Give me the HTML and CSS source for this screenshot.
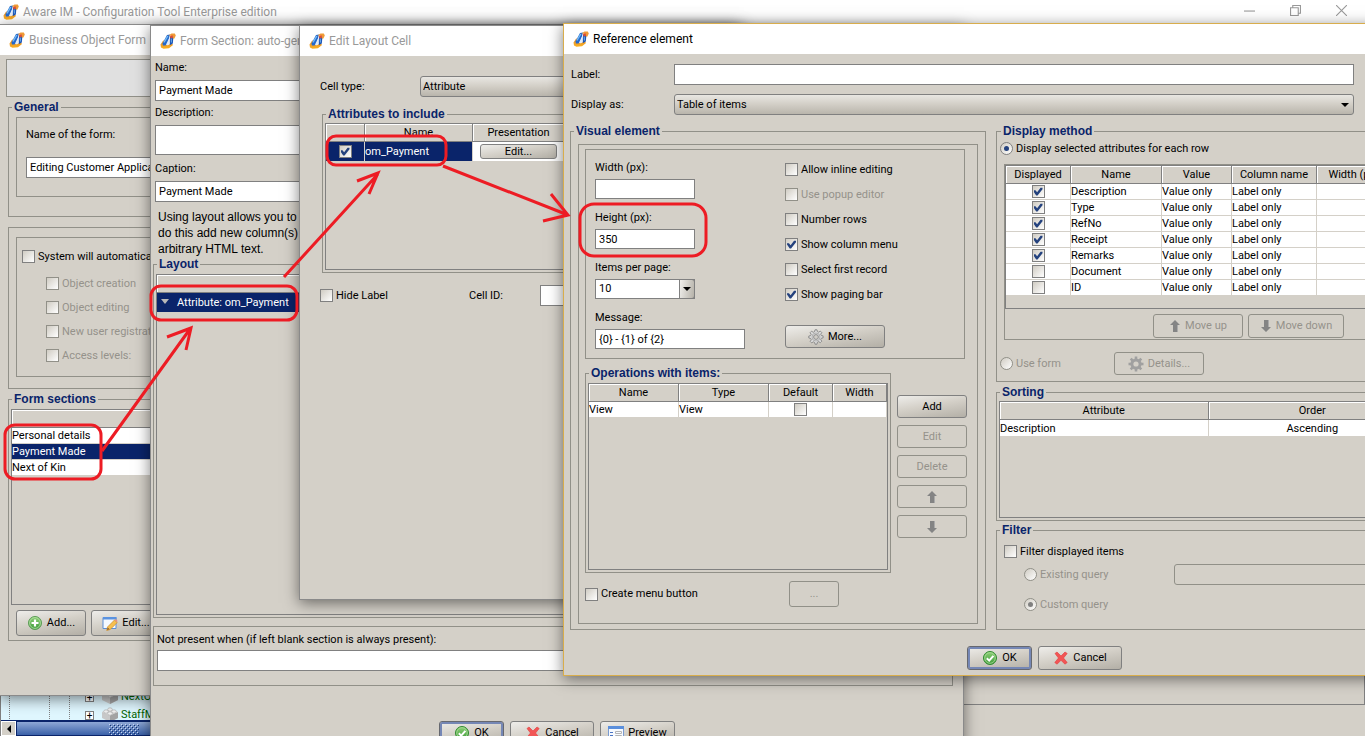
FILE: index.html
```html
<!DOCTYPE html>
<html lang="en">
<head>
<meta charset="utf-8">
<title>Aware IM - Configuration Tool Enterprise edition</title>
<link rel="stylesheet" href="styles.css">
</head>
<body>
<svg class="defs" aria-hidden="true">
  <defs>
    <linearGradient id="g-green" x1="0" y1="0" x2="0" y2="1"><stop offset="0" stop-color="#8fd077"/><stop offset="1" stop-color="#3d9a3a"/></linearGradient>
    <linearGradient id="g-gold" x1="0" y1="0" x2="0" y2="1"><stop offset="0" stop-color="#e08a30"/><stop offset="1" stop-color="#fbb020"/></linearGradient>
    <symbol id="i-logo" viewBox="0 0 16 16">
      <path d="M3.500 7 .5 11.500l.5 3 2.500 1.200 5.500-.5 4-3.200-1-1.500-5 1.500-2.500-.5z" fill="url(#g-gold)"/>
      <path d="m2.500 10.500 4.500-8.500 3-.5L8 9l-2.500 3.500H3z" fill="#2468cc"/>
      <path d="M4 9.500 7.800 3" stroke="#74bdf5" stroke-width="1.300"/>
      <path d="m6.500 10.500 2.800-5.500 1.200 1-.8 5-2.200 1.500z" fill="#e4ecf7"/>
      <path d="m10 4 3.500-.8-.7 7.300-3 1.700z" fill="#1d55b5"/>
      <path d="m11.200 5.500.2 4" stroke="#6cb2f0"/>
      <path d="M8.500 2.500 11.500.6h3.300l1 1.900-1.400 3-1.500.2L12.500 3z" fill="#ef9a35"/>
      <path d="m10 3 2.500-.8.6 2.300L10.500 5.500z" fill="#dc4a34"/>
    </symbol>
    <symbol id="i-add" viewBox="0 0 16 16"><circle cx="8" cy="8" r="6.500" fill="url(#g-green)" stroke="#5a9c55"/><circle cx="8" cy="8" r="5.400" fill="none" stroke="#b9e2a8" stroke-width=".8"/><path d="M8 4.500v7M4.500 8h7" stroke="#fff" stroke-width="2.200"/></symbol>
    <symbol id="i-ok" viewBox="0 0 16 16"><circle cx="8" cy="8" r="6.500" fill="url(#g-green)" stroke="#2f8a2f"/><circle cx="8" cy="8" r="5.300" fill="none" stroke="#a9dc98" stroke-width=".8"/><path d="m4.800 8.200 2.400 2.400 4.200-4.800" fill="none" stroke="#fff" stroke-width="2"/></symbol>
    <symbol id="i-cancel" viewBox="0 0 16 16"><path d="M2 3.500 4 2l4 4 4-4 2.200 1.500L10.500 8l3.700 4.500L12 14.200 8 10.300l-4 3.900-2.200-1.700L5.500 8z" fill="#f25555" stroke="#e23b3b" stroke-width=".6"/></symbol>
    <symbol id="i-edit" viewBox="0 0 16 16"><path d="M1 2.500h13v11H1z" fill="#f4f9ff" stroke="#5c8fd6"/><path d="M1 2h13.500v2.500H1z" fill="#5b93e0"/><path d="m5.500 12 7-7 2.700 2.500-7 7-3.500 1z" fill="#f7c04f" stroke="#c88a2a" stroke-width=".7"/><path d="m12.500 5 1.200-1 2 2-1 1.200z" fill="#e89080"/><path d="m5 15 .8-2.500 1.700 1.700z" fill="#8a5a2a"/></symbol>
    <symbol id="i-preview" viewBox="0 0 16 16"><path d="M.5 1.500h15v13H.5z" fill="#f7faff" stroke="#7a9bd0"/><path d="M0 1h16v3H0z" fill="#5b8fdc"/><path d="M2 7.500h3M2 10.500h3M2 13.500h3" stroke="#4a74c4"/><path d="M7.500 6.500h6v2h-6zM7.500 10.500h6v2h-6z" fill="none" stroke="#b4b4b4"/></symbol>
    <symbol id="i-gear" viewBox="0 0 16 16"><g fill="currentColor"><circle cx="8" cy="8" r="5.600"/><path d="M6.700.5h2.600v15H6.700z"/><path d="M.5 6.700h15v2.600H.5z"/><path d="m1.780 3.620 1.840-1.840 10.600 10.600-1.840 1.840z"/><path d="m12.380 1.780 1.840 1.840-10.600 10.600-1.840-1.840z"/></g><circle class="gear-hole" cx="8" cy="8" r="2.600"/></symbol>
    <symbol id="i-gear-light" viewBox="0 0 16 16"><g fill="#dcdcdc" stroke="#868686" stroke-width=".9"><path d="M7 .8h2l.4 1.900 1.300.5 1.600-1.100 1.500 1.500-1.100 1.600.5 1.300 1.900.4v2l-1.900.4-.5 1.300 1.100 1.600-1.500 1.500-1.600-1.100-1.300.5L9 15.200H7l-.4-1.900-1.300-.5-1.600 1.100-1.500-1.500 1.100-1.600-.5-1.300L.8 9V7l1.900-.4.5-1.300-1.100-1.600 1.500-1.500 1.600 1.100 1.300-.5z"/><circle cx="8" cy="8" r="2.400" fill="#cfccc6"/></g><circle cx="8" cy="8" r="4" fill="none" stroke="#b0b0b0"/></symbol>
    <symbol id="i-up" viewBox="0 0 12 12"><path d="m6 0 5 5H8v7H4V5H1z" fill="#848484"/><path d="M8.500 5v7" stroke="#aaa"/></symbol>
    <symbol id="i-down" viewBox="0 0 12 12"><path d="M4 0h4v7h3l-5 5-5-5h3z" fill="#848484"/><path d="M8.500 0v7" stroke="#aaa"/></symbol>
    <symbol id="i-caret" viewBox="0 0 8 4"><path d="M0 0h8L4 4z" fill="#000"/></symbol>
    <symbol id="i-brick" viewBox="0 0 16 16"><path d="m0 5 8-3 8 3v6l-8 4-8-4z" fill="#c9c9c9"/><path d="m8 8 8-3v6l-8 4z" fill="#a4a4a4"/><path d="m0 5 8-3 8 3-8 3.500z" fill="#e2e2e2"/><g fill="#f1f1f1" stroke="#aaa" stroke-width=".6"><ellipse cx="8" cy="2.500" rx="2.300" ry="1.700"/><ellipse cx="4" cy="4.500" rx="2.300" ry="1.700"/><ellipse cx="12" cy="4.500" rx="2.300" ry="1.700"/><ellipse cx="8" cy="6.500" rx="2.300" ry="1.700"/></g></symbol>
    <pattern id="p-grip" width="4" height="4" patternUnits="userSpaceOnUse"><path d="M0 0h1v1H0zM2 2h1v1H2z" fill="#c9d8f2"/><path d="M1 1h1v1H1zM3 3h1v1H3z" fill="#14316f"/></pattern>
  </defs>
</svg>

<div class="desktop">
  <main class="app">
    <header class="titlebar titlebar-app">
      <svg class="logo"><use href="#i-logo"/></svg>
      <span class="title">Aware IM - Configuration Tool Enterprise edition</span>
      <div class="controls">
        <button type="button" aria-label="Minimize"><svg viewBox="0 0 10 10"><path d="M0 5.500h10"/></svg></button>
        <button type="button" aria-label="Restore"><svg viewBox="0 0 10 10"><path d="M.5 2.500h7v7h-7zM2.500 2.500v-2h7v7h-2"/></svg></button>
        <button type="button" aria-label="Close"><svg viewBox="0 0 10 10"><path d="m0 0 10 10M10 0 0 10"/></svg></button>
      </div>
    </header>
    <div class="app-body">
      <nav class="tree-pane">
        <div class="tree">
          <div class="tree-row"><span class="plus">+</span><svg class="icon"><use href="#i-brick"/></svg><span>NextOfKin</span></div>
          <div class="tree-row"><span class="plus">+</span><svg class="icon"><use href="#i-brick"/></svg><span>StaffMember</span></div>
        </div>
        <div class="hscroll">
          <button type="button" aria-label="Scroll left"><svg viewBox="0 0 4 8"><path d="M4 0v8L0 4z"/></svg></button>
          <div class="thumb"><svg class="grip"><rect width="100%" height="100%" fill="url(#p-grip)"/></svg></div>
        </div>
      </nav>
      <div class="work-pane"></div>
    </div>
  </main>

  <section class="window w-form">
    <header class="titlebar"><svg class="logo"><use href="#i-logo"/></svg><span class="title">Business Object Form</span></header>
    <div class="form-body">
      <div class="banner"></div>
      <fieldset class="group general">
        <legend>General</legend>
        <div class="box name-box">
          <label for="form-name">Name of the form:</label>
          <input id="form-name" class="field" type="text" value="Editing Customer Application">
        </div>
      </fieldset>
      <div class="box auto-outer">
        <div class="box auto-inner">
          <label class="check"><input type="checkbox">System will automatically</label>
          <label class="check sub"><input type="checkbox" disabled>Object creation</label>
          <label class="check sub"><input type="checkbox" disabled>Object editing</label>
          <label class="check sub"><input type="checkbox" disabled>New user registration</label>
          <label class="check sub"><input type="checkbox" disabled>Access levels:</label>
        </div>
      </div>
      <fieldset class="group sections">
        <legend>Form sections</legend>
        <div class="grid-box">
          <table class="grid">
            <thead><tr><th></th></tr></thead>
            <tbody>
              <tr><td>Personal details</td></tr>
              <tr class="selected"><td>Payment Made</td></tr>
              <tr><td>Next of Kin</td></tr>
            </tbody>
          </table>
        </div>
        <div class="bar">
          <button type="button" class="btn"><svg class="icon"><use href="#i-add"/></svg>Add...</button>
          <button type="button" class="btn"><svg class="icon"><use href="#i-edit"/></svg>Edit...</button>
        </div>
      </fieldset>
    </div>
  </section>

  <section class="window w-section">
    <header class="titlebar"><svg class="logo"><use href="#i-logo"/></svg><span class="title">Form Section: auto-generated</span></header>
    <div class="section-body">
      <div class="stack">
        <label for="s-name">Name:</label>
        <input id="s-name" class="field" type="text" value="Payment Made">
        <label for="s-desc">Description:</label>
        <textarea id="s-desc" class="field" rows="2"></textarea>
        <label for="s-cap">Caption:</label>
        <input id="s-cap" class="field" type="text" value="Payment Made">
      </div>
      <p class="hint">Using layout allows you to<br>do this add new column(s)<br>arbitrary HTML text.</p>
      <fieldset class="group layout">
        <legend>Layout</legend>
        <div class="grid-box">
          <table class="grid">
            <thead><tr><th></th></tr></thead>
            <tbody><tr class="selected tall"><td><svg class="tri" viewBox="0 0 8 5"><path d="M0 0h8L4 5z"/></svg>Attribute: om_Payment</td></tr></tbody>
          </table>
        </div>
      </fieldset>
      <div class="box absent">
        <label for="s-when">Not present when (if left blank section is always present):</label>
        <input id="s-when" class="field" type="text">
      </div>
      <div class="bar">
        <button type="button" class="btn primary"><svg class="icon"><use href="#i-ok"/></svg>OK</button>
        <button type="button" class="btn wide"><svg class="icon"><use href="#i-cancel"/></svg>Cancel</button>
        <button type="button" class="btn preview"><svg class="icon"><use href="#i-preview"/></svg>Preview</button>
      </div>
    </div>
  </section>

  <section class="window w-cell">
    <header class="titlebar"><svg class="logo"><use href="#i-logo"/></svg><span class="title">Edit Layout Cell</span></header>
    <div class="cell-body">
      <div class="row type-row">
        <label for="c-type">Cell type:</label>
        <select id="c-type" class="combo"><option>Attribute</option></select>
      </div>
      <fieldset class="group attrs">
        <legend>Attributes to include</legend>
        <div class="grid-box">
          <table class="grid attrs-grid">
            <colgroup><col class="w39"><col class="w108"><col class="w92"><col></colgroup>
            <thead><tr><th></th><th>Name</th><th>Presentation</th><th></th></tr></thead>
            <tbody><tr class="tall"><td class="sel mid"><input type="checkbox" checked aria-label="om_Payment"></td><td class="sel">om_Payment</td><td class="mid"><button type="button" class="btn mini">Edit...</button></td><td></td></tr></tbody>
          </table>
        </div>
      </fieldset>
      <div class="row id-row">
        <label class="check"><input type="checkbox">Hide Label</label>
        <label for="c-id">Cell ID:</label>
        <input id="c-id" class="field" type="text">
      </div>
    </div>
  </section>

  <section class="window w-ref">
    <header class="titlebar active"><svg class="logo"><use href="#i-logo"/></svg><span class="title">Reference element</span></header>
    <div class="ref-body">
      <div class="row top-row"><label for="r-label">Label:</label><input id="r-label" class="field" type="text"></div>
      <div class="row top-row"><label for="r-as">Display as:</label>
        <span class="combo-wrap"><select id="r-as" class="combo"><option>Table of items</option></select><svg class="caret"><use href="#i-caret"/></svg></span></div>
      <div class="columns">
        <fieldset class="group visual">
          <legend>Visual element</legend>
          <div class="box visual-box">
            <div class="box settings">
              <div class="fields">
                <label for="v-w">Width (px):</label><input id="v-w" class="field" type="text">
                <label for="v-h">Height (px):</label><input id="v-h" class="field" type="text" value="350">
                <label for="v-n">Items per page:</label>
                <span class="combo-wrap small"><select id="v-n" class="field"><option>10</option></select><span class="drop"><svg class="caret-in"><use href="#i-caret"/></svg></span></span>
                <label for="v-m">Message:</label><input id="v-m" class="field msg" type="text" value="{0} - {1} of {2}">
              </div>
              <div class="options">
                <label class="check"><input type="checkbox">Allow inline editing</label>
                <label class="check"><input type="checkbox" disabled>Use popup editor</label>
                <label class="check"><input type="checkbox">Number rows</label>
                <label class="check"><input type="checkbox" checked>Show column menu</label>
                <label class="check"><input type="checkbox">Select first record</label>
                <label class="check"><input type="checkbox" checked>Show paging bar</label>
                <button type="button" class="btn more"><svg class="icon"><use href="#i-gear-light"/></svg>More...</button>
              </div>
            </div>
            <div class="ops-row">
              <fieldset class="group ops">
                <legend>Operations with items:</legend>
                <div class="grid-box">
                  <table class="grid">
                    <colgroup><col class="w90"><col class="w90"><col class="w64"><col></colgroup>
                    <thead><tr><th>Name</th><th>Type</th><th>Default</th><th>Width</th></tr></thead>
                    <tbody><tr><td>View</td><td>View</td><td class="mid"><input type="checkbox" aria-label="Default"></td><td></td></tr></tbody>
                  </table>
                </div>
              </fieldset>
              <div class="side">
                <button type="button" class="btn">Add</button>
                <button type="button" class="btn" disabled>Edit</button>
                <button type="button" class="btn" disabled>Delete</button>
                <button type="button" class="btn" disabled aria-label="Up"><svg class="arrow"><use href="#i-up"/></svg></button>
                <button type="button" class="btn" disabled aria-label="Down"><svg class="arrow"><use href="#i-down"/></svg></button>
              </div>
            </div>
            <div class="row menu-row">
              <label class="check"><input type="checkbox">Create menu button</label>
              <button type="button" class="btn dots" disabled>...</button>
            </div>
          </div>
        </fieldset>
        <div class="right">
          <fieldset class="group display">
            <legend>Display method</legend>
            <label class="check"><input type="radio" name="method" checked>Display selected attributes for each row</label>
            <div class="box display-box">
              <div class="grid-box">
                <table class="grid">
                  <colgroup><col class="w65"><col class="w91"><col class="w70"><col class="w85"><col class="w74"><col></colgroup>
                  <thead><tr><th>Displayed</th><th>Name</th><th>Value</th><th>Column name</th><th>Width (px)</th><th></th></tr></thead>
                  <tbody>
                    <tr><td class="mid"><input type="checkbox" checked aria-label="Description"></td><td>Description</td><td>Value only</td><td>Label only</td><td></td><td></td></tr>
                    <tr><td class="mid"><input type="checkbox" checked aria-label="Type"></td><td>Type</td><td>Value only</td><td>Label only</td><td></td><td></td></tr>
                    <tr><td class="mid"><input type="checkbox" checked aria-label="RefNo"></td><td>RefNo</td><td>Value only</td><td>Label only</td><td></td><td></td></tr>
                    <tr><td class="mid"><input type="checkbox" checked aria-label="Receipt"></td><td>Receipt</td><td>Value only</td><td>Label only</td><td></td><td></td></tr>
                    <tr><td class="mid"><input type="checkbox" checked aria-label="Remarks"></td><td>Remarks</td><td>Value only</td><td>Label only</td><td></td><td></td></tr>
                    <tr><td class="mid"><input type="checkbox" aria-label="Document"></td><td>Document</td><td>Value only</td><td>Label only</td><td></td><td></td></tr>
                    <tr><td class="mid"><input type="checkbox" aria-label="ID"></td><td>ID</td><td>Value only</td><td>Label only</td><td></td><td></td></tr>
                  </tbody>
                </table>
              </div>
              <div class="bar">
                <button type="button" class="btn" disabled><svg class="arrow"><use href="#i-up"/></svg>Move up</button>
                <button type="button" class="btn" disabled><svg class="arrow"><use href="#i-down"/></svg>Move down</button>
              </div>
            </div>
            <div class="row use-row">
              <label class="check"><input type="radio" name="method" disabled>Use form</label>
              <button type="button" class="btn" disabled><svg class="icon gear"><use href="#i-gear"/></svg>Details...</button>
            </div>
          </fieldset>
          <fieldset class="group sorting">
            <legend>Sorting</legend>
            <div class="grid-box">
              <table class="grid">
                <thead><tr><th>Attribute</th><th>Order</th></tr></thead>
                <tbody><tr><td>Description</td><td class="mid">Ascending</td></tr></tbody>
              </table>
            </div>
          </fieldset>
          <fieldset class="group filter">
            <legend>Filter</legend>
            <label class="check"><input type="checkbox">Filter displayed items</label>
            <div class="row query-row">
              <label class="check"><input type="radio" name="query" disabled>Existing query</label>
              <select class="combo" disabled aria-label="Existing query"><option></option></select>
            </div>
            <label class="check custom"><input type="radio" name="query" checked disabled>Custom query</label>
          </fieldset>
        </div>
      </div>
      <div class="bar ref-bar">
        <button type="button" class="btn primary"><svg class="icon"><use href="#i-ok"/></svg>OK</button>
        <button type="button" class="btn wide"><svg class="icon"><use href="#i-cancel"/></svg>Cancel</button>
      </div>
    </div>
  </section>

  <svg class="marks" aria-hidden="true">
    <rect x="5" y="425" width="96" height="54" rx="10"/>
    <rect x="151" y="286" width="146" height="34" rx="10"/>
    <rect x="327" y="136" width="119" height="29" rx="9"/>
    <rect x="580" y="204" width="126" height="52" rx="14"/>
    <path d="M102 451 190 329M167 337l24-9-5 22"/>
    <path d="m284 277 94-103M357 181l21-8-9 21"/>
    <path d="m443 166 125 49M551 194l17 21-25 6"/>
  </svg>
</div>
</body>
</html>
```
FILE: styles.css
```css
* { box-sizing: border-box; }
html, body { height: 100%; }
body {
  margin: 0;
  font: 11px/14px Roboto, "DejaVu Sans", sans-serif;
  color: #000;
  background: #d4d0c8;
}
.defs { position: absolute; width: 0; height: 0; }
.desktop { position: relative; height: 100vh; overflow: hidden; }
input, select, button, textarea { font: inherit; color: inherit; margin: 0; }
fieldset { min-width: 0; margin: 0; padding: 0; }

/* main window */
.app { display: flex; flex-direction: column; height: 100%; }
.app-body { flex: 1; display: flex; }
.tree-pane { width: 50%; display: flex; flex-direction: column; justify-content: flex-end; background: #e0f7ff; border-left: 1px solid #808080; }
.tree { margin-bottom: -4px; padding-left: 84px; background: repeating-linear-gradient(180deg, #808080 0 1px, #e0f7ff 1px 2px) 8px 0 / 1px 100% no-repeat, repeating-linear-gradient(180deg, #808080 0 1px, #e0f7ff 1px 2px) 48px 0 / 1px 100% no-repeat, repeating-linear-gradient(180deg, #808080 0 1px, #e0f7ff 1px 2px) 68px 0 / 1px 100% no-repeat; }
.tree-row { display: flex; align-items: center; height: 18px; color: #006400; }
.tree-row .icon { margin: 0 3px 0 8px; }
.plus { width: 9px; height: 9px; border: 1px solid #808080; background: #fff; color: #000; font-size: 10px; line-height: 7px; text-align: center; }
.hscroll { position: relative; display: flex; height: 16px; background: #d4d0c8; border-top: 1px solid #0a246a; }
.hscroll button { width: 15px; padding: 0; border: 1px solid #fff; background: #d4d0c8; display: flex; align-items: center; justify-content: center; }
.hscroll button svg { width: 4px; height: 8px; }
.thumb { flex: 1; padding: 2px 0 0 92px; border: 1px solid #0a246a; background: linear-gradient(#8fa8d6, #3a61a8); }
.grip { display: block; width: 30px; height: 11px; }
.work-pane { flex: 1; margin-bottom: 31px; border: 1px solid #808080; border-top: 0; }

/* windows */
.window { position: absolute; display: flex; flex-direction: column; background: #d4d0c8; border: 1px solid #8a8a8a; box-shadow: 0 3px 14px rgba(0, 0, 0, .5); }
.titlebar { display: flex; align-items: center; gap: 4px; height: 30px; padding: 0 0 0 9px; background: #fff; color: #999; font: 12px/16px Roboto, "Noto Sans", sans-serif; flex: none; }
.titlebar-app { height: 24px; padding-left: 3px; }
.titlebar.active { color: #000; }
.title { white-space: nowrap; }
.logo { width: 16px; height: 16px; flex: none; }
.controls { margin: 0 18px 3px auto; display: flex; gap: 35px; }
.controls button { padding: 0; border: 0; background: none; height: 12px; display: flex; align-items: center; }
.controls svg { width: 11px; height: 11px; fill: none; stroke: #999; }
.w-form { left: -1px; top: 24px; width: 740px; height: 672px; }
.w-section { left: 150px; top: 25px; width: 814px; height: 760px; }
.w-cell { left: 299px; top: 25px; width: 445px; height: 575px; }
.w-ref { left: 563px; right: -66px; top: 23px; border-color: #d8ad4c; }

/* shared controls */
.group, .box, .grid-box { border: 1px solid #919088; }
.group > legend { margin-left: 1px; padding: 0 2px; color: #0a246a; font: bold 12px/14px "Liberation Sans", Arial, sans-serif; }
.field { height: 20px; padding: 0 3px; border: 1px solid #808080; border-radius: 0; background: #fff; width: 100%; display: block; outline: 0; appearance: none; resize: none; }
.combo { appearance: none; width: 100%; height: 21px; padding: 0 2px; border: 1px solid #808080; border-radius: 3px; background: linear-gradient(#e8e6e2, #d2cec6 50%, #b9b5ac); display: block; }
.combo:disabled { background: #d4d0c8; border-color: #919088; opacity: 1; }
.combo-wrap { position: relative; display: block; }
.caret { position: absolute; right: 5px; top: 9px; width: 8px; height: 4px; pointer-events: none; }
.drop { position: absolute; right: 0; top: 0; width: 16px; height: 20px; display: flex; align-items: center; justify-content: center; border: 1px solid #808080; border-radius: 0 3px 3px 0; background: linear-gradient(100deg, #f0efec, #b5b1a8); pointer-events: none; }
.caret-in { width: 8px; height: 4px; }
.check { display: flex; align-items: center; gap: 3px; white-space: nowrap; height: 13px; }
.check:has(:disabled) { color: #95928b; }
input[type=checkbox], input[type=radio] { appearance: none; width: 13px; height: 13px; flex: none; border: 1px solid #808080; background: linear-gradient(135deg, #d0ccc3, #fff); display: grid; place-items: center; }
input[type=radio] { border-radius: 50%; }
input:disabled { border-color: #919088; }
input[type=checkbox]:checked::before { content: ""; width: 9px; height: 9px; background: #24427e; clip-path: polygon(0 35%, 22% 35%, 40% 58%, 78% 8%, 100% 8%, 100% 25%, 45% 95%, 30% 95%, 0 50%); }
input[type=radio]:checked::before { content: ""; width: 5px; height: 5px; border-radius: 50%; background: #24427e; }
input[type=radio]:disabled:checked::before { background: #808080; }
.btn { display: flex; align-items: center; justify-content: center; gap: 4px; height: 23px; padding: 0; border: 1px solid #808080; border-radius: 3px; background: linear-gradient(170deg, #eeedea, #d4d0c8 45%, #b3afa6); white-space: nowrap; flex: none; }
.btn:disabled { background: #d4d0c8; border-color: #919088; color: #95928b; }
.icon { width: 16px; height: 16px; flex: none; }
.gear { color: #a0a0a0; }
.gear-hole { fill: #d4d0c8; }
.arrow { width: 12px; height: 12px; }
.bar { display: flex; gap: 6px; }
.bar .btn { width: 70px; height: 24px; }
.bar .btn.primary { width: 65px; border-color: #66686f; box-shadow: inset 0 0 0 2px #7587b5; }
.bar .btn.wide { width: 84px; }
.row { display: flex; align-items: center; }

/* tables */
.grid-box { border-color: #808080; }
.grid { width: 100%; border-collapse: separate; border-spacing: 0; table-layout: fixed; }
.grid th { height: 18px; padding: 0; font-weight: normal; border-right: 1px solid #808080; border-bottom: 1px solid #808080; box-shadow: inset 1px 1px #fff; overflow: hidden; white-space: nowrap; }
.grid td { height: 16px; padding: 0; line-height: 15px; background: #fff; border-right: 1px solid #d4d0c8; border-bottom: 1px solid #d4d0c8; overflow: hidden; white-space: nowrap; }
.grid .mid { text-align: center; }
.grid td input { margin: 0 auto; }
.grid .selected td, .grid .sel { background: #0a246a; color: #fff; }
.grid .tall td { height: 20px; }
.w39 { width: 39px; }
.w64 { width: 64px; }
.w65 { width: 65px; }
.w70 { width: 70px; }
.w74 { width: 74px; }
.w85 { width: 85px; }
.w90 { width: 90px; }
.w91 { width: 91px; }
.w92 { width: 92px; }
.w108 { width: 108px; }

/* business object form */
.form-body { flex: 1; padding: 4px 8px 0; }
.banner { height: 38px; margin: 0 -2px 3px; border: 1px solid #919088; background: #e0e0e0; }
.general { padding: 3px 8px 19px 7px; }
.general > legend, .visual > legend, .filter > legend { margin-left: -4px; }
.name-box { height: 80px; padding: 10px 9px; }
.name-box .field { margin-top: 15px; height: 21px; }
.auto-outer { margin-top: 10px; padding: 9px 7px 11px; }
.auto-inner { display: flex; flex-direction: column; gap: 11px; height: 140px; padding: 12px 5px 0; }
.auto-inner .check:first-child { margin-bottom: 3px; }
.sub { margin-left: 24px; }
.sections { margin-top: 3px; padding: 3px 2px 4px; }
.sections .grid-box { height: 196px; }
.sections .bar { gap: 5px; padding: 5px 0 0 5px; }
.sections .btn { height: 26px; }

/* form section */
.section-body { padding: 5px 10px 0 2px; display: flex; flex-direction: column; }
.stack { display: grid; gap: 5px; padding: 0 2px; }
.stack .field { height: 21px; }
.stack textarea.field { height: 30px; margin-bottom: 2px; }
.hint { margin: 7px 0 0 5px; font: 12px/16px "Liberation Sans", Arial, sans-serif; }
.layout { padding: 3px 2px 2px; }
.layout .grid-box { height: 341px; }
.tri { width: 8px; height: 5px; margin: 0 8px 2px 4px; fill: #b8b8b8; }
.absent { margin-top: 8px; padding: 6px 4px 14px 3px; display: grid; gap: 3px; }
.absent .field { height: 21px; }
.section-body .bar { margin: 35px 0 0 286px; }
.section-body > .bar .preview { width: 75px; }

/* edit layout cell */
.cell-body { padding: 20px 8px 0 20px; }
.type-row label { width: 100px; flex: none; }
.attrs { margin: 10px 0 0 2px; padding: 2px; }
.attrs .grid-box { height: 147px; }
.mini { width: 77px; height: 15px; margin: 0 auto; }
.id-row { padding-top: 12px; }
.id-row .check { width: 149px; }
.id-row .check + label { width: 71px; }
.id-row .field { width: 100px; height: 21px; }

/* reference element */
.ref-body { padding: 10px 9px 5px 6px; }
.top-row { padding-left: 1px; margin: 0 67px 9px 0; }
.top-row label { width: 103px; flex: none; }
.top-row .field { height: 21px; }
.combo-wrap { flex: 1; }
.columns { display: flex; gap: 10px; }
.visual { width: 416px; flex: none; padding: 6px 7px 5px; display: flex; flex-direction: column; }
.visual-box { flex: 1; padding: 4px 6px 0; }
.settings { display: flex; height: 210px; margin-right: 6px; padding: 11px 9px 0; }
.fields { width: 190px; display: grid; grid-auto-rows: max-content; }
.fields label { margin-bottom: 4px; }
.fields .field { width: 100px; margin-bottom: 12px; }
.fields .small { width: 100px; }
.fields .msg { width: 150px; }
.options { display: grid; gap: 12px; align-content: start; padding-top: 2px; }
.more { width: 100px; margin-top: 12px; }
.ops-row { display: flex; gap: 6px; margin-top: 7px; }
.ops { width: 306px; padding: 3px 2px 2px; }
.ops .grid-box { height: 187px; }
.side { display: grid; gap: 7px; align-content: start; padding-top: 29px; }
.side .btn { width: 70px; }
.menu-row { justify-content: space-between; padding: 8px 132px 15px 0; }
.menu-row .dots { width: 50px; height: 26px; }
.right { flex: 1; min-width: 0; }
.display { padding: 4px 2px 6px 3px; }
.display-box { margin: 9px 0 12px 4px; }
.display .grid-box { height: 144px; border-right: 0; }
.display .bar { padding: 5px 0 1px 148px; gap: 5px; }
.display .bar .btn { width: 90px; }
.display .bar .btn + .btn { width: 96px; }
.use-row .check { width: 114px; }
.use-row .btn { width: 90px; }
.sorting { margin-top: 3px; padding: 2px; }
.sorting .grid-box { height: 117px; }
.sorting .grid td { border-bottom: 0; }
.filter { margin-top: 2px; padding: 8px 7px 18px; }
.query-row { margin: 6px 0 13px 20px; }
.query-row .check { width: 150px; flex: none; }
.custom { margin-left: 20px; }
.ref-bar { padding: 16px 0 0 397px; }

.marks { position: absolute; inset: 0; width: 100%; height: 100%; fill: none; stroke: #ed1c24; stroke-width: 3; pointer-events: none; }
```
